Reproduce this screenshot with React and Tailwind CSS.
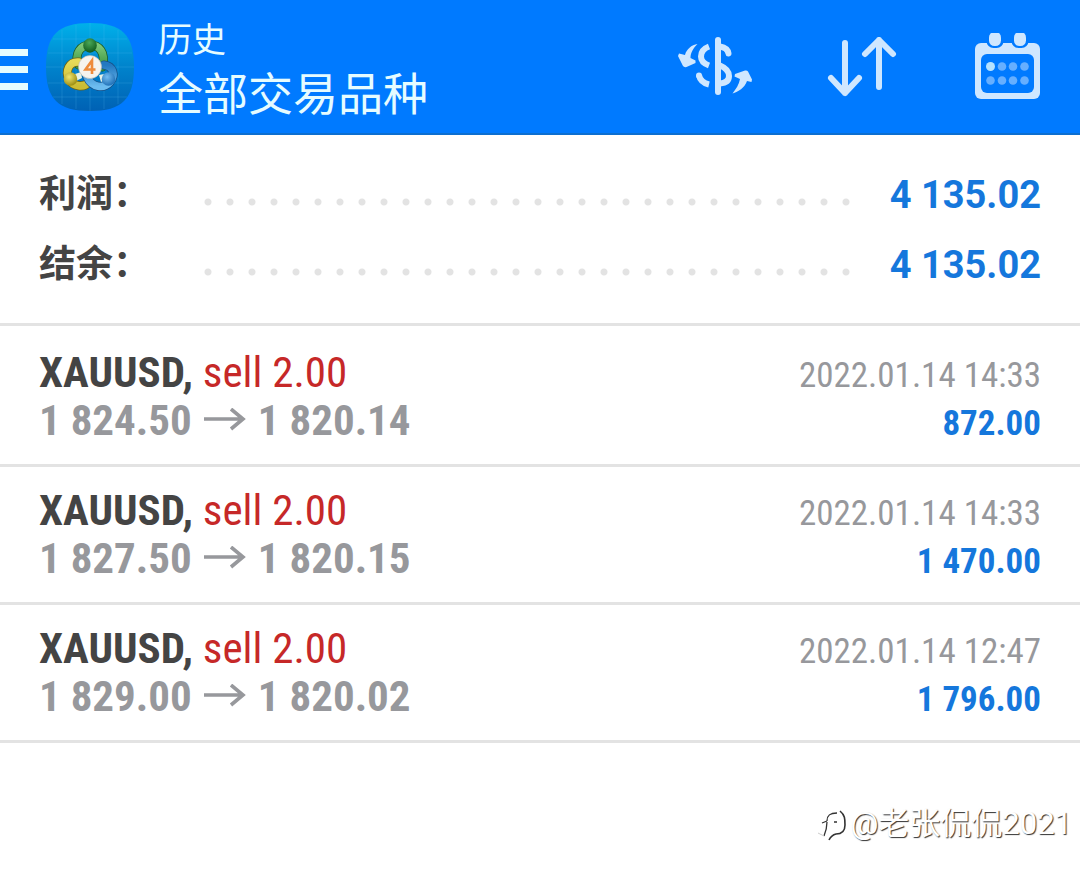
const totals = [
    { label: "利润：", value: "4 135.02" },
    { label: "结余：", value: "4 135.02" },
];

const deals = [
    { id: 1, symbol: "XAUUSD", side: "sell", volume: "2.00", open: "1 824.50", close: "1 820.14", time: "2022.01.14 14:33", profit: "872.00" },
    { id: 2, symbol: "XAUUSD", side: "sell", volume: "2.00", open: "1 827.50", close: "1 820.15", time: "2022.01.14 14:33", profit: "1 470.00" },
    { id: 3, symbol: "XAUUSD", side: "sell", volume: "2.00", open: "1 829.00", close: "1 820.02", time: "2022.01.14 12:47", profit: "1 796.00" },
];

function AppLogo() {
    return (
        <svg viewBox="0 0 88 88" className="w-[88px] h-[88px]" aria-hidden="true">
            <defs>
                <linearGradient id="tile" x1="0" y1="0" x2="0" y2="1">
                    <stop offset="0" stopColor="#00b0ea" />
                    <stop offset="0.5" stopColor="#0083cc" />
                    <stop offset="1" stopColor="#0061b4" />
                </linearGradient>
                <linearGradient id="green" x1="0" y1="0" x2="0" y2="1">
                    <stop offset="0" stopColor="#7cc878" />
                    <stop offset="1" stopColor="#3a9440" />
                </linearGradient>
                <linearGradient id="yellow" x1="0" y1="0" x2="0" y2="1">
                    <stop offset="0" stopColor="#e6da58" />
                    <stop offset="1" stopColor="#cbbc34" />
                </linearGradient>
                <linearGradient id="blue" x1="0" y1="0" x2="0" y2="1">
                    <stop offset="0" stopColor="#2378c0" />
                    <stop offset="1" stopColor="#6cbcf0" />
                </linearGradient>
                <radialGradient id="greenBall" cx="0.45" cy="0.3" r="0.7">
                    <stop offset="0" stopColor="#4aa858" />
                    <stop offset="1" stopColor="#0f5a1c" />
                </radialGradient>
                <radialGradient id="yellowBall" cx="0.4" cy="0.35" r="0.7">
                    <stop offset="0" stopColor="#f0e670" />
                    <stop offset="1" stopColor="#98880c" />
                </radialGradient>
                <radialGradient id="blueBall" cx="0.4" cy="0.35" r="0.7">
                    <stop offset="0" stopColor="#74bcf0" />
                    <stop offset="1" stopColor="#1b6cb4" />
                </radialGradient>
            </defs>
            <path d="M44 0C76 0 88 12 88 44S76 88 44 88 0 76 0 44 12 0 44 0Z" fill="url(#tile)" />
            <path d="M16 7V81M30 2V86M44 0V88M58 2V86M72 7V81M7 16H81M2 30H86M0 44H88M2 60H86M7 74H81" stroke="#5cc4f0" strokeOpacity="0.2" fill="none" />
            <g fill="none" strokeLinecap="round">
                <path d="M32.500 42C28 30 35 22 44 22S60 29 56.500 44" stroke="#1c5e27" strokeWidth="9" />
                <path d="M32.500 42C28 30 35 22 44 22S60 29 56.500 44" stroke="url(#green)" strokeWidth="7.500" />
                <path d="M33 39C23 38 19 48 23 56S38 65 43 59" stroke="#6e6413" strokeWidth="9" />
                <path d="M33 39C23 38 19 48 23 56S38 65 43 59" stroke="url(#yellow)" strokeWidth="7.500" />
                <path d="M58 42C67 43 70 52 64 59S46 65 41 54" stroke="#174f86" strokeWidth="9" />
                <path d="M58 42C67 43 70 52 64 59S46 65 41 54" stroke="url(#blue)" strokeWidth="7.500" />
            </g>
            <path d="M29 51l6-2 1 6-6 3zM53 52l5-1 1 6-4 2z" fill="#e6f1e6" />
            <ellipse cx="44" cy="22.500" rx="6.800" ry="7.200" fill="url(#greenBall)" />
            <circle cx="24.500" cy="56" r="6.800" fill="url(#yellowBall)" />
            <circle cx="62.500" cy="56" r="6.800" fill="url(#blueBall)" />
            <circle cx="44" cy="44" r="11.500" fill="#f6f3ee" stroke="#b9b9ae" strokeWidth="0.600" />
            <path d="M46 51V37.500L39.500 46.500H49.500" fill="none" stroke="#ee8b3c" strokeWidth="2.600" />
        </svg>
    );
}

function CurrencyIcon() {
    return (
        <svg viewBox="0 0 76 60" className="w-[76px] h-[60px]" fill="none" aria-hidden="true">
            <path d="M40 3V55" stroke="#cfe7ff" strokeWidth="6" strokeLinecap="round" />
            <path d="M31 9.500C24.500 12 23 16 23 19.500S25.500 26.500 31 28.500" stroke="#cfe7ff" strokeWidth="6" />
            <path d="M42 9.500C47.500 10.500 50 13 50.500 16.500" stroke="#cfe7ff" strokeWidth="6" strokeLinecap="round" />
            <path d="M42 28.500C48 31 51 34.500 51 39S48 46 42 46.500" stroke="#cfe7ff" strokeWidth="6" />
            <path d="M21 38.500C22 43 25 46 31 47.500" stroke="#cfe7ff" strokeWidth="6" />
            <circle cx="21" cy="38.500" r="3" fill="#cfe7ff" />
            <path d="M19.500 7C13.500 8 8.500 12 7 18L1 16.500 0 19 5 29Q6 30.500 8.500 30L17.500 26 17.500 23.500 12.500 21C12.500 15.500 15.500 11 19.500 7Z" fill="#cfe7ff" />
            <path d="M54.500 56.500C60.500 54.500 66.500 51 69 44L73.500 45 74 42.500 70 34.500Q69 33 67 33.500L57 37 56.500 39.500 62 42C61 47.500 58 52 54.500 56.500Z" fill="#cfe7ff" />
        </svg>
    );
}

function SortIcon() {
    return (
        <svg viewBox="0 0 70 60" className="w-[70px] h-[60px]" fill="none" stroke="#cfe7ff" strokeWidth="6" strokeLinecap="round" strokeLinejoin="round" aria-hidden="true">
            <path d="M18 6V56M4 41L18 56 32 41" />
            <path d="M52 50V3M38 17L52 3 66 17" />
        </svg>
    );
}

function CalendarIcon() {
    return (
        <svg viewBox="0 0 66 68" className="w-[66px] h-[68px]" aria-hidden="true">
            <rect x="0" y="10" width="65" height="56" rx="6" fill="#cfe7ff" />
            <rect x="6" y="21" width="53" height="39" rx="6" fill="#007aff" />
            <rect x="11.500" y="-5" width="17" height="20" rx="7" fill="#007aff" />
            <rect x="36.500" y="-5" width="17" height="20" rx="7" fill="#007aff" />
            <rect x="14" y="-1" width="12" height="14" rx="5.500" fill="#cfe7ff" />
            <rect x="39" y="-1" width="12" height="14" rx="5.500" fill="#cfe7ff" />
            <circle cx="15.500" cy="33.500" r="4.500" fill="#b5e2ff" />
            <g fill="#66afff">
                <circle cx="27" cy="33.500" r="4.300" />
                <circle cx="38" cy="33.500" r="4.300" />
                <circle cx="49.500" cy="33.500" r="4.300" />
                <circle cx="15.500" cy="47.500" r="4.300" />
                <circle cx="27" cy="47.500" r="4.300" />
                <circle cx="38" cy="47.500" r="4.300" />
                <circle cx="49.500" cy="47.500" r="4.300" />
            </g>
        </svg>
    );
}

function Header() {
    return (
        <header className="flex items-center h-[135px] bg-[#007aff] border-b-2 border-[#0d6fd0] pr-[39px]">
            <button type="button" aria-label="菜单" className="flex flex-col gap-[10px] w-7 mt-1.5 mr-[18px]">
                <span className="h-[7px] w-full bg-[#e6fcff]"></span>
                <span className="h-[7px] w-full bg-[#e6fcff]"></span>
                <span className="h-[7px] w-full bg-[#e6fcff]"></span>
            </button>
            <AppLogo />
            <div className="flex-1 ml-6 pt-1.5 text-[#e6fcff]">
                <div className="text-[34px] leading-[52px]">历史</div>
                <h1 className="text-[45px] leading-[60px]">全部交易品种</h1>
            </div>
            <div className="flex items-center">
                <button type="button" aria-label="货币" className="mr-[73px]"><CurrencyIcon /></button>
                <button type="button" aria-label="排序" className="mr-[78px]"><SortIcon /></button>
                <button type="button" aria-label="日期"><CalendarIcon /></button>
            </div>
        </header>
    );
}

function Totals() {
    return (
        <section className="px-[39px] pt-[25px] pb-[23px] border-b-3 border-[#e3e3e3]">
            {totals.map((row) => (
                <div key={row.label} className="flex items-center h-[70px]">
                    <span className="w-[165px] text-[37px] font-bold text-[#444]">{row.label}</span>
                    <span className="flex-1 h-2 mt-3.5 mr-9 bg-[radial-gradient(circle_at_4px_4px,#e3e3e3_3px,transparent_4px)] bg-[length:22px_8px]"></span>
                    <span className="text-[38px] font-bold text-[#1577dc]">{row.value}</span>
                </div>
            ))}
        </section>
    );
}

function Deal({ deal }) {
    return (
        <li className="flex justify-between px-[39px] pt-[19px] pb-4 border-b-3 border-[#e3e3e3] font-['Roboto_Condensed','Liberation_Sans_Narrow',sans-serif]">
            <div>
                <div className="text-[43px] leading-[48px] text-[#c62828]">
                    <span className="font-bold text-[#444]">{deal.symbol},</span> {deal.side} {deal.volume}
                </div>
                <div className="flex items-center gap-3 text-[43px] leading-[48px] font-bold text-[#97989c]">
                    <span>{deal.open}</span>
                    <svg viewBox="0 0 42 24" className="w-[42px] h-6" fill="none" stroke="currentColor" strokeWidth="3.600" aria-hidden="true">
                        <path d="M0 11H39M27 1L39 11 27 21" />
                    </svg>
                    <span>{deal.close}</span>
                </div>
            </div>
            <div className="pt-1 text-right text-[35px] leading-[48px]">
                <div className="text-[#97989c]">{deal.time}</div>
                <div className="font-bold text-[#1577dc]">{deal.profit}</div>
            </div>
        </li>
    );
}

export default function App() {
    return (
        <div className="min-h-screen flex flex-col bg-white font-[Roboto,'Noto_Sans_CJK_SC',sans-serif]">
            <Header />
            <main className="flex-1">
                <Totals />
                <ul className="pt-[3px]">
                    {deals.map((deal) => <Deal key={deal.id} deal={deal} />)}
                </ul>
            </main>
            <footer className="flex items-center justify-end gap-1 pr-2 pb-7 text-[31px] leading-[48px] text-white [text-shadow:1px_1px_1px_#333]">
                <svg viewBox="0 0 28 34" className="w-7 h-[34px]" fill="none" stroke="#333" aria-hidden="true">
                    <path d="M9 14C9 8 12 6 19 6M4 16L9 14M9 15C9 20 8 24 6 29M16 15h3" strokeWidth="1.300" />
                    <path d="M22 4C27 8 27 12 27 18S24 27 18 27C14 28 12 31 11 33" strokeWidth="1.600" />
                    <path d="M0 26L6 29" stroke="#ccc" />
                </svg>
                <span>@老张侃侃2021</span>
            </footer>
        </div>
    );
}
